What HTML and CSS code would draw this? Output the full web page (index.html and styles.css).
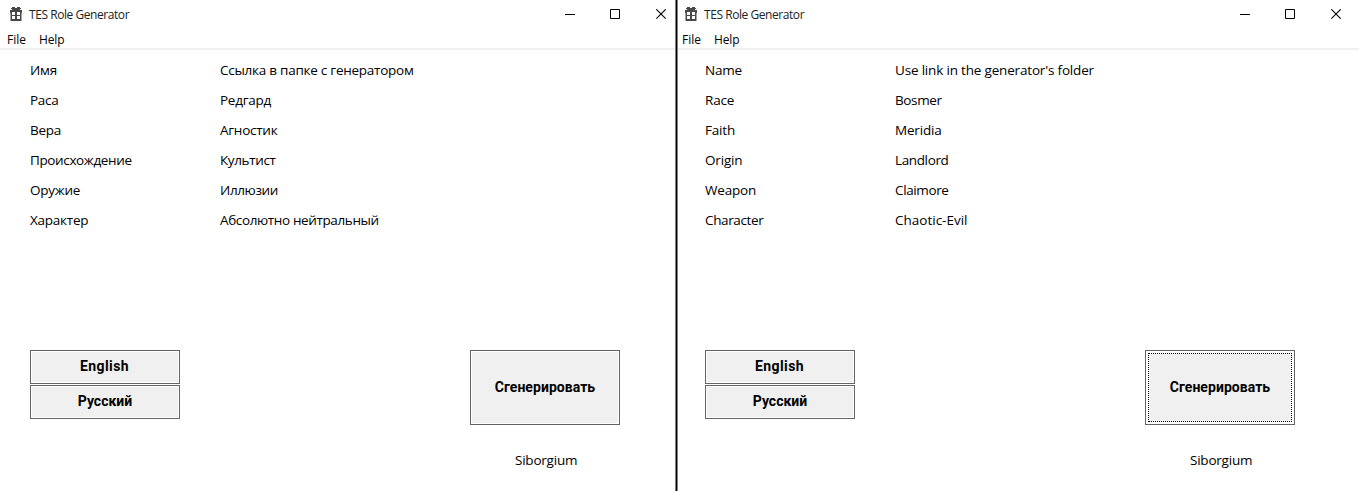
FILE: index.html
```
<!DOCTYPE html>
<html lang="ru">
<head>
<meta charset="utf-8">
<title>TES Role Generator</title>
<link rel="stylesheet" href="styles.css">
</head>
<body>
<svg class="defs" width="0" height="0">
  <symbol id="gift" viewBox="0 0 12 14" shape-rendering="crispEdges">
    <path fill="#484848" d="M2 0h3v1h2v-1h3v1h1v1h-1v1h2v3h-1v8h-10v-8h-1v-3h2v-1h-1v-1h1z"/>
    <path fill="#fff" d="M2 5h3v3h-3zM7 5h3v3h-3zM2 9h3v3h-3zM7 9h3v3h-3z"/>
    <path fill="#484848" opacity=".5" d="M0 6h1v8h-1zM11 6h1v8h-1z"/>
  </symbol>
  <symbol id="min" viewBox="0 0 11 11"><path fill="#000" d="M0 5h10v1h-10z"/></symbol>
  <symbol id="max" viewBox="0 0 11 11"><path fill="none" stroke="#000" d="M.5 .5h9v9h-9z"/></symbol>
  <symbol id="close" viewBox="0 0 11 11"><path fill="none" stroke="#000" stroke-width="1.1" d="M.3 .3l9.4 9.4M9.7 .3l-9.4 9.4"/></symbol>
</svg>
<main class="screen">
  <section class="window">
    <header class="titlebar">
      <svg class="app-icon"><use href="#gift"/></svg>
      <span class="title">TES Role Generator</span>
      <span class="controls"><svg><use href="#min"/></svg><svg><use href="#max"/></svg><svg><use href="#close"/></svg></span>
    </header>
    <nav class="menu"><span class="file">File</span><span class="help">Help</span></nav>
    <div class="fields">
      <span>Имя</span><span>Ссылка в папке с генератором</span>
      <span>Раса</span><span>Редгард</span>
      <span>Вера</span><span>Агностик</span>
      <span class="tight">Происхождение</span><span class="tight">Культист</span>
      <span>Оружие</span><span class="tight">Иллюзии</span>
      <span>Характер</span><span class="tight">Абсолютно нейтральный</span>
    </div>
    <div class="actions">
      <div class="languages"><button class="en">English</button><button class="ru">Русский</button></div>
      <div class="generate"><button class="big">Сгенерировать</button><span class="author">Siborgium</span></div>
    </div>
  </section>
  <section class="window second">
    <header class="titlebar">
      <svg class="app-icon"><use href="#gift"/></svg>
      <span class="title">TES Role Generator</span>
      <span class="controls"><svg><use href="#min"/></svg><svg><use href="#max"/></svg><svg><use href="#close"/></svg></span>
    </header>
    <nav class="menu"><span class="file">File</span><span class="help">Help</span></nav>
    <div class="fields latin">
      <span>Name</span><span>Use link in the generator's folder</span>
      <span>Race</span><span class="tight">Bosmer</span>
      <span>Faith</span><span>Meridia</span>
      <span>Origin</span><span class="tight">Landlord</span>
      <span>Weapon</span><span class="tight">Claimore</span>
      <span class="tight">Character</span><span class="loose">Chaotic-Evil</span>
    </div>
    <div class="actions">
      <div class="languages"><button class="en">English</button><button class="ru">Русский</button></div>
      <div class="generate"><button class="big focused">Сгенерировать</button><span class="author">Siborgium</span></div>
    </div>
  </section>
</main>
</body>
</html>
```
FILE: styles.css
```
* { box-sizing: border-box; }
body { margin: 0; background: #fff; color: #000; font: 13.5px/30px "Open Sans", "Noto Sans", sans-serif; overflow: hidden; }
.defs { display: block; height: 0; }
.screen { display: grid; grid-template-columns: 675px 684px; height: 491px; }
.window { overflow: hidden; white-space: nowrap; }
.second { border-left: 3px solid #000; border-image: linear-gradient(90deg, #808080 0 1px, #000 1px 2px, #808080 2px 3px) 0 0 0 3; }
.titlebar { display: flex; height: 30px; padding-left: 10px; }
.app-icon { width: 12px; height: 14px; margin: 7px 7px 0 0; }
.title { font-size: 12px; line-height: 29px; letter-spacing: -.44px; color: #222; }
.controls { display: grid; grid-template-columns: 45px 46px 11px; margin-left: auto; padding-top: 9px; width: 110px; }
.controls svg { width: 11px; height: 11px; display: block; }
.menu { display: flex; height: 20px; border-bottom: 2px solid #f0f0f0; padding-left: 7px; font-size: 12px; line-height: 20px; }
.file { width: 32px; }
.help { letter-spacing: -.15px; }
.fields { display: grid; grid-template-columns: 190px auto; grid-auto-rows: 30px; padding: 5px 0 0 30px; height: 300px; align-content: start; letter-spacing: -.25px; }
.latin { letter-spacing: -.18px; }
.fields .tight { letter-spacing: -.37px; }
.fields .loose { letter-spacing: 0; }
.actions { display: grid; grid-template-columns: 440px 150px; padding-left: 30px; }
.languages { display: grid; grid-template-rows: 34px 34px; row-gap: 1px; width: 150px; align-content: start; }
button { display: flex; align-items: center; justify-content: center; margin: 0; padding: 0 1px 2px 0; border: 1px solid #646464; border-radius: 0; background: #f0f0f0; box-shadow: inset 0 0 0 1px #fff; color: #000; font: bold 14px/16px Roboto, sans-serif; outline: none; }
.en { letter-spacing: .4px; }
.ru { padding-right: 0; }
.big { width: 150px; height: 75px; padding-right: 0; letter-spacing: .05px; }
.focused { box-shadow: inset 0 0 0 2px #fff; outline: 1px dotted #000; outline-offset: -4px; }
.author { display: block; margin: 20px 0 0 45px; letter-spacing: -.22px; }
.second .titlebar { padding-left: 7px; padding-right: 9px; }
.second .menu { padding-left: 4px; }
.second .fields, .second .actions { padding-left: 27px; }
```
